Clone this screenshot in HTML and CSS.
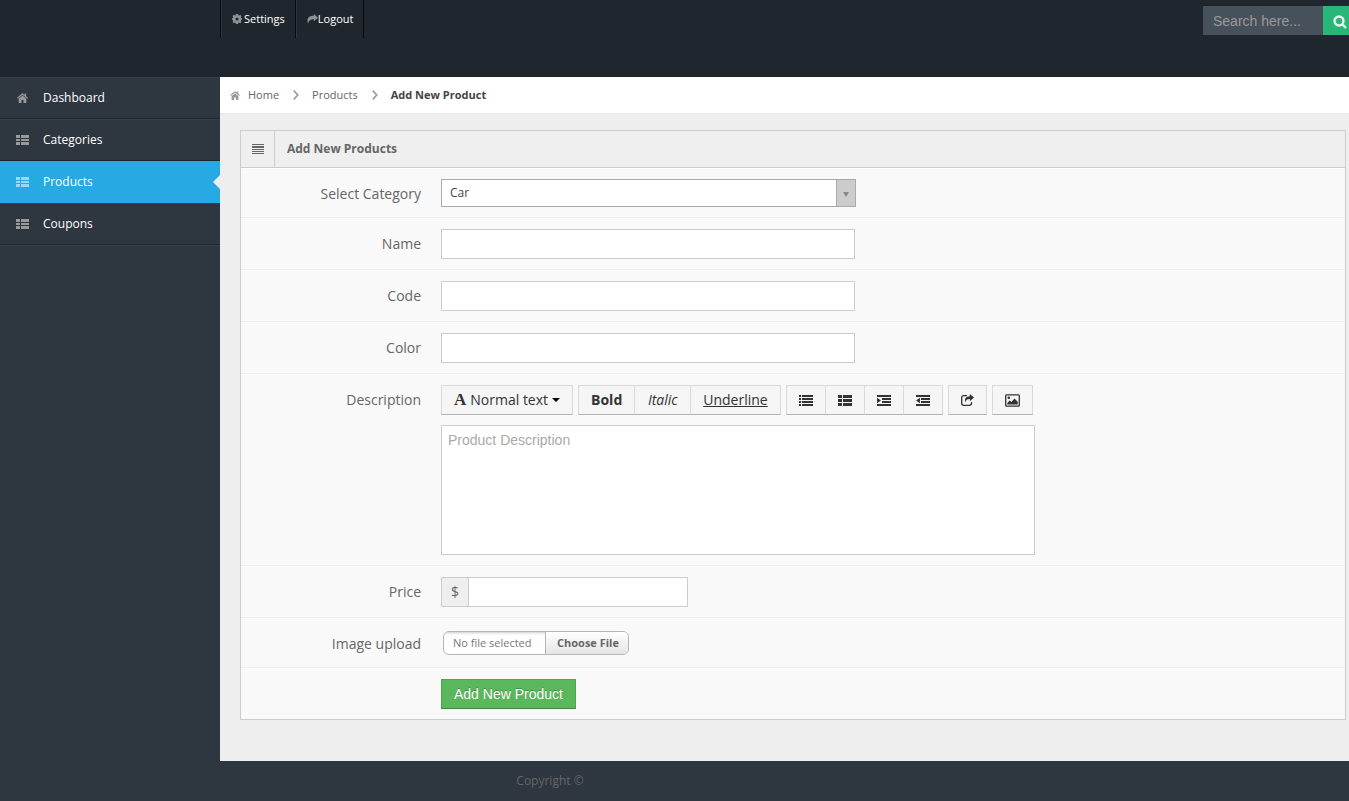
FILE: index.html
```html
<!DOCTYPE html>
<html lang="en">
<head>
<meta charset="utf-8">
<title>Add New Product</title>
<link rel="stylesheet" href="styles.css">
</head>
<body>
<svg class="sprite" aria-hidden="true">
  <symbol id="home" viewBox="0 0 12 11"><path d="M6 0 0 5.200l.8 1L6 1.900l5.200 4.300.8-1-2-1.700V.6H8.300v1.500zM6 2.800 1.800 6.300V11h3.100V7.800h2.200V11h3.100V6.300z"/></symbol>
  <symbol id="th-list" viewBox="0 0 13 10"><path d="M0 0h4v3H0zM5 0h8v3H5zM0 4h4v2H0zM5 4h8v2H5zM0 7h4v3H0zM5 7h8v3H5z"/></symbol>
  <symbol id="cog" viewBox="0 0 12 12"><path fill-rule="evenodd" d="M4.800 0h2.400l.3 1.500 1 .4 1.300-.9 1.600 1.600-.9 1.300.4 1 1.500.2v1.900l-1.500.3-.4 1 .9 1.300-1.600 1.600-1.300-.9-1 .4-.3 1.500H4.800l-.3-1.500-1-.4-1.300.9L.6 9.600l.9-1.300-.4-1L0 7V5.100l1.100-.3.4-1L.6 2.500 2.200.9l1.300.9 1-.4zM6 4.200a1.800 1.800 0 1 0 0 3.600 1.800 1.800 0 0 0 0-3.600z"/></symbol>
  <symbol id="share" viewBox="0 0 12 11"><path d="M7.500 0 12 4 7.500 8V5.800C4.300 5.600 2.200 6.500 1.200 10.500-.9 5.500 1.500 2 7.500 2z"/></symbol>
  <symbol id="search" viewBox="0 0 14 14"><path fill="none" stroke="currentColor" stroke-width="2.400" d="M6 1.500a4.500 4.500 0 1 0 0 9 4.500 4.500 0 0 0 0-9zM9.200 9.200l3.800 3.800"/></symbol>
  <symbol id="chevron" viewBox="0 0 6 10"><path fill="none" stroke="currentColor" stroke-width="1.600" d="m.8.600 4 4.400-4 4.400"/></symbol>
  <symbol id="justify" viewBox="0 0 12 10"><path d="M0 0h12v1H0zM0 2h12v2H0zM0 5h12v1H0zM0 7h12v1H0zM0 9h12v1H0z"/></symbol>
  <symbol id="list" viewBox="0 0 14 12"><path d="M0 1h2v2H0zM3 1h11v2H3zM0 4h2v2H0zM3 4h11v2H3zM0 7h2v2H0zM3 7h11v2H3zM0 10h2v2H0zM3 10h11v2H3z"/></symbol>
  <symbol id="th-dark" viewBox="0 0 14 12"><path d="M0 1h4v3H0zM5 1h9v3H5zM0 5h4v3H0zM5 5h9v3H5zM0 9h4v3H0zM5 9h9v3H5z"/></symbol>
  <symbol id="indent" viewBox="0 0 14 12"><path d="M0 1h14v2H0zM5 4h9v2H5zM5 7h9v2H5zM0 10h14v2H0zM0 3.800l4 2.700-4 2.700z"/></symbol>
  <symbol id="outdent" viewBox="0 0 14 12"><path d="M0 1h14v2H0zM5 4h9v2H5zM5 7h9v2H5zM0 10h14v2H0zM4 3.800 0 6.500l4 2.700z"/></symbol>
  <symbol id="export" viewBox="0 0 13 12"><path d="M8.800 0 13 3.600 8.800 7.200V5.100C6.200 5 5 5.700 4.400 8.400 3.100 4.500 5 2.300 8.800 2.200z"/><path fill="none" stroke="currentColor" stroke-width="1.300" d="M6 1.600H2.800Q.7 1.600.7 3.700v5.500q0 2.100 2.100 2.100h5.600q2.100 0 2.100-2.100V8"/></symbol>
  <symbol id="picture" viewBox="0 0 15 13"><path fill="none" stroke="currentColor" stroke-width="1.300" d="M1.600.8h11.800q.9 0 .9.900v9.600q0 .9-.9.900H1.600q-.9 0-.9-.9V1.700q0-.9.900-.9z"/><path d="M2.300 10.500V9l2.400-2.600 1.600 1.500 3.200-3.500 3.200 3.400v2.700zM3.800 2.500a1.300 1.300 0 1 1 0 2.600 1.300 1.300 0 0 1 0-2.600z"/></symbol>
  <symbol id="caret" viewBox="0 0 8 4"><path d="M0 0h8L4 4z"/></symbol>
  <symbol id="arrow" viewBox="0 0 6 5"><path d="M0 0h6L3 5z"/></symbol>
</svg>
<header class="header">
  <nav class="user-nav">
    <a href="#"><svg class="icon-cog"><use href="#cog"/></svg>Settings</a>
    <a href="#"><svg class="icon-share"><use href="#share"/></svg>Logout</a>
  </nav>
  <form class="search">
    <input type="text" placeholder="Search here..." aria-label="Search">
    <button type="button" aria-label="Search"><svg><use href="#search"/></svg></button>
  </form>
</header>
<div class="body">
  <nav class="sidebar">
    <a href="#"><svg><use href="#home"/></svg>Dashboard</a>
    <a href="#"><svg><use href="#th-list"/></svg>Categories</a>
    <a href="#" class="active"><svg><use href="#th-list"/></svg>Products</a>
    <a href="#"><svg><use href="#th-list"/></svg>Coupons</a>
  </nav>
  <main class="content">
    <nav class="breadcrumb">
      <a href="#"><svg class="icon-home"><use href="#home"/></svg>Home</a>
      <svg class="icon-chevron"><use href="#chevron"/></svg>
      <a href="#">Products</a>
      <svg class="icon-chevron"><use href="#chevron"/></svg>
      <a href="#" class="current">Add New Product</a>
    </nav>
    <section class="widget">
      <div class="widget-title">
        <span class="widget-icon"><svg><use href="#justify"/></svg></span>
        <h5>Add New Products</h5>
      </div>
      <form>
        <div class="row">
          <label for="category">Select Category</label>
          <div class="select">
            <select id="category"><option>Car</option></select>
            <span class="select-arrow"><svg><use href="#arrow"/></svg></span>
          </div>
        </div>
        <div class="row"><label for="name">Name</label><input class="field" id="name" type="text"></div>
        <div class="row"><label for="code">Code</label><input class="field" id="code" type="text"></div>
        <div class="row"><label for="color">Color</label><input class="field" id="color" type="text"></div>
        <div class="row">
          <label for="description">Description</label>
          <div class="editor">
            <div class="toolbar">
              <div class="group"><button type="button"><b class="font-mark">A</b>Normal text<svg class="icon-caret"><use href="#caret"/></svg></button></div>
              <div class="group styles">
                <button type="button"><b>Bold</b></button>
                <button type="button"><i>Italic</i></button>
                <button type="button"><u>Underline</u></button>
              </div>
              <div class="group">
                <button type="button" aria-label="Bulleted list"><svg><use href="#list"/></svg></button>
                <button type="button" aria-label="Numbered list"><svg><use href="#th-dark"/></svg></button>
                <button type="button" aria-label="Indent"><svg><use href="#indent"/></svg></button>
                <button type="button" aria-label="Outdent"><svg><use href="#outdent"/></svg></button>
              </div>
              <div class="group"><button type="button" aria-label="Insert link"><svg class="icon-export"><use href="#export"/></svg></button></div>
              <div class="group"><button type="button" aria-label="Insert image"><svg class="icon-picture"><use href="#picture"/></svg></button></div>
            </div>
            <textarea id="description" placeholder="Product Description"></textarea>
          </div>
        </div>
        <div class="row">
          <label for="price">Price</label>
          <div class="prepend"><span>$</span><input class="field" id="price" type="text"></div>
        </div>
        <div class="row">
          <label for="image">Image upload</label>
          <div class="uploader">
            <span class="filename">No file selected</span><span class="action">Choose File</span>
            <input id="image" type="file">
          </div>
        </div>
        <div class="row actions"><button class="submit" type="button">Add New Product</button></div>
      </form>
    </section>
  </main>
</div>
<footer class="footer"><p>Copyright ©</p></footer>
</body>
</html>
```

FILE: styles.css
```css
* { box-sizing: border-box; }

body {
  margin: 0;
  min-height: 100vh;
  display: flex;
  flex-direction: column;
  background: #2e363f;
  color: #666;
  font: 14px/20px "Open Sans", sans-serif;
}

a { color: inherit; text-decoration: none; }
svg { fill: currentColor; flex: none; }
.sprite { position: absolute; width: 0; height: 0; }
button, input, select, textarea { margin: 0; border-radius: 0; }

/* Header */
.header {
  display: flex;
  justify-content: space-between;
  align-items: flex-start;
  height: 77px;
  padding-left: 220px;
  background: #1f262d;
}

.user-nav { display: flex; border-left: 1px solid #080a0c; }
.user-nav a {
  display: flex;
  align-items: center;
  height: 38px;
  padding: 0 10px;
  border-left: 1px solid #2e363f;
  border-right: 1px solid #080a0c;
  color: #fff;
  font-size: 11px;
}
.user-nav svg { color: #8f9396; }
.icon-cog { width: 10px; height: 10px; margin-right: 2px; }
.icon-share { width: 11px; height: 10px; }

.search { display: flex; padding-top: 6px; }
.search input {
  width: 120px;
  height: 29px;
  padding: 0 10px;
  border: 0;
  background: #47515b;
  color: #fff;
  font: 14px "Liberation Sans", Arial, sans-serif;
}
.search input::placeholder { color: #999; }
.search button {
  width: 26px;
  height: 29px;
  padding: 2px 0 0 10px;
  border: 0;
  background: #28b779;
  color: #e4f6ee;
}
.search svg { display: block; width: 14px; height: 14px; }

/* Sidebar */
.body { display: flex; flex: 1; }
.sidebar { width: 220px; flex: none; }
.sidebar a {
  position: relative;
  display: flex;
  align-items: center;
  gap: 14px;
  height: 42px;
  padding: 0 16px 1px;
  border-top: 1px solid #37414b;
  border-bottom: 1px solid #1f262d;
  color: #fff;
  font-size: 12px;
}
.sidebar a:last-child { box-shadow: 0 1px #37414b; }
.sidebar svg { width: 13px; height: 10px; color: #999; }
.sidebar .active { background: #27a9e3; border-color: #27a9e3; }
.sidebar .active svg { color: #9ad7f3; }
.sidebar .active::after {
  content: "";
  position: absolute;
  right: 0;
  top: 13px;
  border: 7px solid transparent;
  border-left: 0;
  border-right-color: #eee;
}

/* Content */
.content { flex: 1; min-width: 0; padding-bottom: 41px; background: #eee; }
.breadcrumb {
  display: flex;
  align-items: center;
  height: 37px;
  padding: 0 10px;
  border-bottom: 1px solid #e3ebe8;
  background: #fff;
  font-size: 11px;
}
.breadcrumb a { display: flex; align-items: center; }
.breadcrumb .current { color: #444; font-weight: bold; }
.icon-home { width: 10px; height: 9px; margin-right: 8px; color: #999; }
.icon-chevron { width: 6px; height: 10px; margin: 0 13px 0 14px; color: #999; }

.widget { margin: 16px 3px 0 20px; border: 1px solid #cdcdcd; background: #f9f9f9; }
.widget-title {
  display: flex;
  height: 37px;
  border-bottom: 1px solid #cdcdcd;
  background: #efefef;
}
.widget-icon {
  display: flex;
  align-items: center;
  justify-content: center;
  width: 34px;
  border-right: 1px solid #cdcdcd;
}
.widget-icon svg { width: 12px; height: 10px; }
.widget-title h5 { margin: 0; padding: 8px 12px; font-size: 12px; }

.row {
  display: flex;
  align-items: flex-start;
  padding: 10px 0;
  border-top: 1px solid #fff;
  border-bottom: 1px solid #eee;
}
.row label { width: 180px; margin: 0 20px -2px 0; padding: 5px 0; text-align: right; flex: none; }
.field {
  width: 414px;
  height: 30px;
  padding: 4px 6px;
  border: 1px solid #ccc;
  background: #fff;
  color: #555;
  font: 14px "Liberation Sans", Arial, sans-serif;
}

.select { position: relative; width: 415px; height: 28px; }
.select select {
  appearance: none;
  width: 100%;
  height: 28px;
  padding: 0 28px 1px 8px;
  border: 1px solid #aaa;
  background: #fff;
  color: #444;
  font: 12px "Open Sans", sans-serif;
}
.select-arrow {
  position: absolute;
  right: 0;
  top: 0;
  display: flex;
  align-items: center;
  justify-content: center;
  width: 20px;
  height: 28px;
  padding-top: 2px;
  border: 1px solid #aaa;
  background: #ccc;
  color: #888;
  pointer-events: none;
}
.select-arrow svg { width: 6px; height: 5px; }

/* Text editor */
.toolbar { display: flex; gap: 5px; margin-bottom: 10px; }
.group { display: flex; }
.group button {
  display: flex;
  align-items: center;
  justify-content: center;
  height: 30px;
  padding: 0 12px;
  border: 1px solid #d9d9d9;
  border-bottom-color: #b3b3b3;
  background: #f5f5f5;
  color: #333;
  font: 14px/20px "Open Sans", sans-serif;
}
.styles button { min-width: 57px; }
.group button + button { margin-left: -1px; }
.group svg { width: 14px; height: 12px; }
.font-mark { margin-right: 4px; font: bold 17px/20px "Liberation Serif", serif; }
.group .icon-caret { width: 8px; height: 4px; margin-left: 4px; color: #000; }
.group .icon-export { width: 13px; height: 12px; }
.group .icon-picture { width: 15px; height: 13px; }
textarea {
  display: block;
  width: 594px;
  height: 130px;
  padding: 4px 6px;
  border: 1px solid #ccc;
  background: #fff;
  color: #555;
  font: 14px/20px "Liberation Sans", Arial, sans-serif;
  resize: none;
}
textarea::placeholder { color: #a9a9a9; }

.prepend { display: flex; }
.prepend span {
  width: 27px;
  padding: 4px 0;
  border: 1px solid #ccc;
  border-right: 0;
  background: #eee;
  text-align: center;
}
.prepend .field { width: 220px; }

.uploader {
  position: relative;
  display: flex;
  height: 24px;
  margin: 2px;
  overflow: hidden;
  border: 1px solid #b5b5b5;
  border-radius: 6px;
  background: #fff;
  color: #777;
  font-size: 11px;
  line-height: 22px;
}
.filename { width: 101px; padding-left: 9px; box-shadow: inset 0 3px 3px -2px #ccc; }
.action {
  width: 83px;
  padding-left: 2px;
  border-left: 1px solid #b5b5b5;
  background: linear-gradient(#fff, #e5e5e5);
  color: #666;
  font-weight: bold;
  text-align: center;
}
.uploader input { position: absolute; inset: 0; width: 100%; opacity: 0; }

.actions { padding-left: 200px; border-bottom: 0; }
.submit {
  height: 30px;
  padding: 0 12px;
  border: 1px solid #4da64d;
  border-bottom-color: #3d8b3d;
  background: #5bb75b;
  color: #fff;
  font: 14px "Liberation Sans", Arial, sans-serif;
  text-shadow: 0 -1px rgba(0, 0, 0, .25);
}

.footer { color: #666; font-size: 12px; text-align: center; }
.footer p { max-width: 1100px; margin: 0; padding: 10px 0; }
```
